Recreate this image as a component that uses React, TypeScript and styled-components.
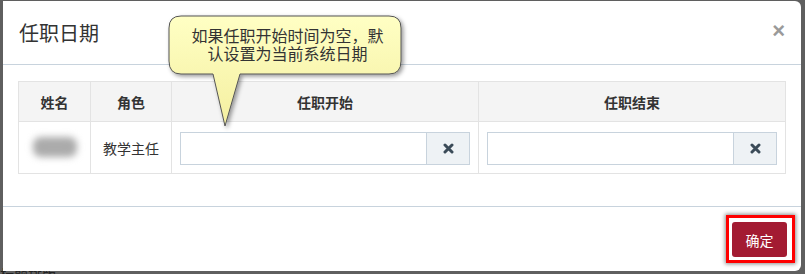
import React from "react";
import styled, { createGlobalStyle } from "styled-components";

const Global = createGlobalStyle`
  html, body { margin: 0; padding: 0; }
  body {
    background: #5f5f5f;
    font-family: "Liberation Sans", "Noto Sans CJK SC", sans-serif;
    color: #333;
    overflow: hidden;
    height: 274px;
  }
`;

const Page = styled.div`
  padding: 1px 4px 0 3px;
  height: 274px;
  box-sizing: border-box;
  position: relative;
`;

const Modal = styled.div`
  position: relative;
  height: 270px;
  background: #fff;
  border-radius: 0 6px 6px 0;
  display: flex;
  flex-direction: column;
  box-sizing: border-box;
`;

const Header = styled.div`
  height: 63px;
  border-bottom: 1px solid #c8d3dd;
  display: flex;
  align-items: center;
  justify-content: space-between;
  padding: 0 16px 0 16px;
`;

const Title = styled.h4`
  margin: 0;
  font-size: 20px;
  font-weight: 400;
  color: #333;
  line-height: 1;
  margin-top: 2px;
`;

const Close = styled.span`
  font-size: 22px;
  font-weight: 700;
  color: #9a9a9a;
  line-height: 1;
  margin-top: -4px;
`;

const Body = styled.div`
  padding: 16px 15px 32px;
  border-bottom: 1px solid #c8d3dd;
`;

const Table = styled.table`
  width: 768px;
  border-collapse: collapse;
  table-layout: fixed;
  font-size: 14px;
`;

const Th = styled.th<{ w?: number }>`
  width: ${(p) => (p.w ? `${p.w}px` : "auto")};
  height: 40px;
  box-sizing: border-box;
  background: #f4f4f4;
  border: 1px solid #e3e3e3;
  font-weight: 700;
  color: #333;
  text-align: center;
  padding: 0;
`;

const Td = styled.td`
  height: 52px;
  box-sizing: border-box;
  border: 1px solid #e3e3e3;
  text-align: center;
  vertical-align: middle;
  padding: 0 8px;
  color: #333;
`;

const InputCell = styled.td`
  height: 52px;
  box-sizing: border-box;
  border: 1px solid #e3e3e3;
  padding: 1px 8px 0 8px;
  vertical-align: middle;
`;

const BlurName = styled.div`
  width: 44px;
  height: 20px;
  margin: 0 auto 2px;
  background: #ababab;
  filter: blur(3.5px);
  border-radius: 8px;
`;

const InputGroup = styled.div`
  display: flex;
  height: 33px;
`;

const TextInput = styled.div`
  flex: 1;
  border: 1px solid #c8d3dd;
  border-right: none;
  background: #fff;
`;

const AddonButton = styled.div`
  width: 42px;
  border: 1px solid #c8d3dd;
  background: #eef2f5;
  display: flex;
  align-items: center;
  justify-content: center;
`;

const Footer = styled.div`
  flex: 1;
  display: flex;
  justify-content: flex-end;
  align-items: flex-start;
  padding: 15px 14px 0 0;
`;

const PrimaryButton = styled.button`
  position: relative;
  width: 55px;
  height: 35px;
  border: none;
  border-radius: 3px;
  background: #a31b32;
  color: #fff;
  font-family: "Liberation Sans", "Noto Sans CJK SC", sans-serif;
  font-size: 14px;
  padding: 0;
  &::after {
    content: "";
    position: absolute;
    left: -6px;
    right: -8px;
    top: -7px;
    bottom: -6px;
    border: 3px solid #ff0000;
    box-shadow: 0 0 4px 1px rgba(0, 0, 0, 0.45);
  }
`;

const Callout = styled.div`
  position: absolute;
  left: 164px;
  top: 13px;
  width: 242px;
  height: 118px;
`;

const CalloutShape = styled.svg`
  position: absolute;
  left: 0;
  top: 0;
  overflow: visible;
`;

const CalloutText = styled.div`
  position: absolute;
  left: 4px;
  top: 14px;
  width: 233px;
  text-align: center;
  font-size: 16px;
  line-height: 18px;
  color: #333;
`;

const Backdrop = styled.div`
  position: absolute;
  left: 0;
  top: 264px;
  font-size: 14px;
  color: #222;
  font-family: "Noto Sans CJK SC", sans-serif;
  line-height: 20px;
`;

const TimesIcon = () => (
  <svg width="11" height="11" viewBox="0 0 11 11">
    <path d="M2 2 L9 9 M9 2 L2 9" stroke="#3b4b58" strokeWidth="3" strokeLinecap="round" />
  </svg>
);

const DateInput = () => (
  <InputGroup>
    <TextInput />
    <AddonButton>
      <TimesIcon />
    </AddonButton>
  </InputGroup>
);

export default function App() {
  return (
    <>
      <Global />
      <Page>
        <Backdrop>标题排版</Backdrop>
        <Modal>
          <Header>
            <Title>任职日期</Title>
            <Close>×</Close>
          </Header>
          <Body>
            <Table>
              <thead>
                <tr>
                  <Th w={72}>姓名</Th>
                  <Th w={81}>角色</Th>
                  <Th w={307}>任职开始</Th>
                  <Th>任职结束</Th>
                </tr>
              </thead>
              <tbody>
                <tr>
                  <Td>
                    <BlurName />
                  </Td>
                  <Td>教学主任</Td>
                  <InputCell>
                    <DateInput />
                  </InputCell>
                  <InputCell>
                    <DateInput />
                  </InputCell>
                </tr>
              </tbody>
            </Table>
          </Body>
          <Footer>
            <PrimaryButton>确定</PrimaryButton>
          </Footer>
          <Callout>
            <CalloutShape width="242" height="118" viewBox="0 0 242 118">
              <defs>
                <linearGradient id="cg" x1="0" y1="0" x2="0" y2="1">
                  <stop offset="0" stopColor="#ffffc4" />
                  <stop offset="1" stopColor="#f4efa0" />
                </linearGradient>
                <filter id="cs" x="-10%" y="-10%" width="130%" height="130%">
                  <feDropShadow dx="2" dy="2" stdDeviation="2" floodColor="#000" floodOpacity="0.4" />
                </filter>
              </defs>
              <path
                d="M14 2 H222 Q234 2 234 14 V47 Q234 60 222 60 H73 L58 112 L46 60 H14 Q2 60 2 47 V14 Q2 2 14 2 Z"
                fill="url(#cg)"
                stroke="#555"
                strokeWidth="1"
                filter="url(#cs)"
              />
            </CalloutShape>
            <CalloutText>
              如果任职开始时间为空，默
              <br />
              认设置为当前系统日期
            </CalloutText>
          </Callout>
        </Modal>
      </Page>
    </>
  );
}
